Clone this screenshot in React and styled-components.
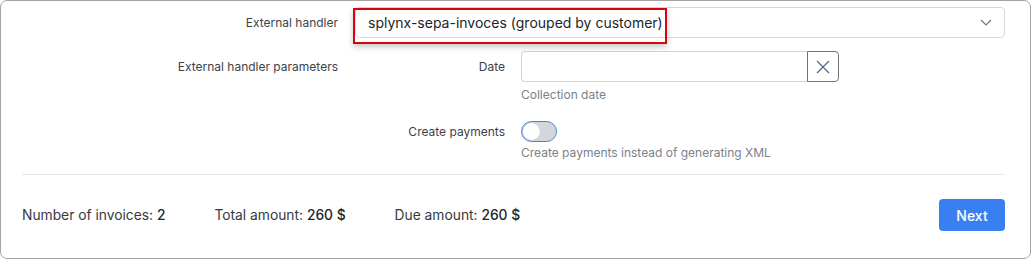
import React from 'react'
import styled, { createGlobalStyle } from 'styled-components'

const GlobalStyle = createGlobalStyle`
  html, body {
    margin: 0;
    padding: 0;
    background: #ffffff;
  }
  body {
    font-family: Inter, "Noto Sans", sans-serif;
    color: #343a40;
  }
  * { box-sizing: border-box; }
`

const Card = styled.div`
  width: 1031px;
  height: 259px;
  border: 1px solid #a4a4a4;
  border-radius: 7px;
  padding: 6px 25px 0 21px;
`

const Row = styled.div`
  display: grid;
  grid-template-columns: ${p => p.labelWidth || 316}px 1fr;
  column-gap: ${p => p.gap || 17}px;
  margin-top: ${p => p.top || 0}px;
  align-items: start;
`

const Label = styled.div`
  text-align: right;
  font-size: 12px;
  color: #3d4349;
  line-height: ${p => p.lh || 31}px;
  white-space: nowrap;
`

const SelectBox = styled.div`
  position: relative;
  height: 31px;
  border: 1px solid #d6dae0;
  border-radius: 4px;
  display: flex;
  align-items: center;
  justify-content: space-between;
  padding: 0 12px 0 12px;
  font-size: 14px;
  color: #212529;
`

const Highlight = styled.div`
  position: absolute;
  left: -3px;
  top: 0px;
  width: 314px;
  height: 36px;
  border: 2px solid #d4070f;
  box-shadow: 0 3px 6px rgba(0, 0, 0, 0.22);
  pointer-events: none;
`

const SelectText = styled.span`
  position: relative;
  z-index: 1;
`

const Field = styled.div`
  display: flex;
  flex-direction: column;
  align-items: flex-start;
`

const InputGroup = styled.div`
  display: flex;
  width: 318px;
  height: 31px;
`

const TextInput = styled.div`
  flex: 1;
  border: 1px solid #ced4da;
  border-right: none;
  border-radius: 4px 0 0 4px;
`

const ClearButton = styled.div`
  width: 32px;
  border: 1px solid #6c757d;
  border-radius: 0 4px 4px 0;
  display: flex;
  align-items: center;
  justify-content: center;
`

const Help = styled.div`
  font-size: 12px;
  color: #7b8189;
  line-height: 18px;
  margin-top: ${p => p.top || 4}px;
`

const Toggle = styled.div`
  width: 36px;
  height: 21px;
  border: 1px solid #3b82f6;
  border-radius: 11px;
  background: #d3d6db;
  padding: 1px;
  display: flex;
  align-items: center;
`

const Knob = styled.div`
  width: 17px;
  height: 17px;
  border-radius: 50%;
  background: #ffffff;
  box-shadow: 0 0 1px rgba(0, 0, 0, 0.2);
`

const Divider = styled.div`
  height: 1px;
  background: #e4e8ec;
  margin-top: 12px;
`

const Footer = styled.div`
  display: flex;
  align-items: center;
  margin-top: 24px;
  gap: 49px;
  font-size: 13.8px;
  color: #343a40;
`

const Stat = styled.span`
  b { font-weight: 500; color: #212529; }
`

const NextButton = styled.button`
  margin-left: auto;
  width: 66px;
  height: 32px;
  border: none;
  border-radius: 4px;
  background: #3a7ff2;
  color: #ffffff;
  font-family: Inter, sans-serif;
  font-size: 14px;
  font-weight: 500;
`

export default function App() {
  return (
    <>
      <GlobalStyle />
      <Card>
        <Row>
          <Label>External handler</Label>
          <SelectBox>
            <Highlight />
            <SelectText>splynx-sepa-invoces (grouped by customer)</SelectText>
            <svg width="12" height="7" viewBox="0 0 12 7" fill="none">
              <path d="M1 1l5 5 5-5" stroke="#6b7280" strokeWidth="1.1" />
            </svg>
          </SelectBox>
        </Row>
        <Row top={13}>
          <Label>External handler parameters</Label>
          <div>
            <Row labelWidth={150} gap={16}>
              <Label>Date</Label>
              <Field>
                <InputGroup>
                  <TextInput />
                  <ClearButton>
                    <svg width="14" height="14" viewBox="0 0 14 14" fill="none">
                      <path d="M1 1l12 12M13 1L1 13" stroke="#4f6680" strokeWidth="1.2" />
                    </svg>
                  </ClearButton>
                </InputGroup>
                <Help>Collection date</Help>
              </Field>
            </Row>
            <Row labelWidth={150} gap={16} top={17}>
              <Label lh={21}>Create payments</Label>
              <Field>
                <Toggle>
                  <Knob />
                </Toggle>
                <Help top={2}>Create payments instead of generating XML</Help>
              </Field>
            </Row>
          </div>
        </Row>
        <Divider />
        <Footer>
          <Stat>Number of invoices: <b>2</b></Stat>
          <Stat>Total amount: <b>260 $</b></Stat>
          <Stat>Due amount: <b>260 $</b></Stat>
          <NextButton>Next</NextButton>
        </Footer>
      </Card>
    </>
  )
}
